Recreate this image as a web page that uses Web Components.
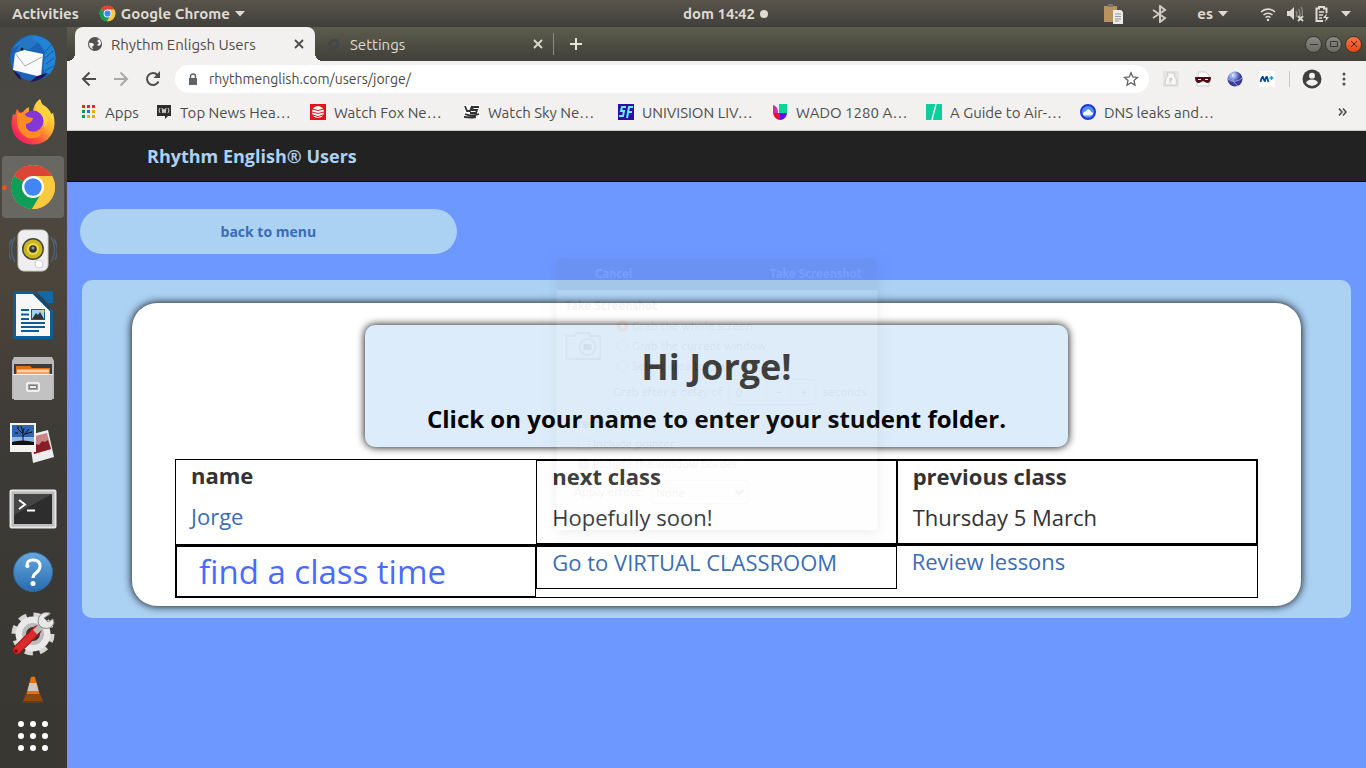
<!DOCTYPE html>
<html lang="en">
<head>
<meta charset="utf-8">
<title>Rhythm English Users</title>
<style>
    body {
        margin: 0;
        min-height: 100vh;
        display: flex;
        flex-direction: column;
        font-family: Ubuntu, 'Noto Sans', sans-serif;
        font-size: 15px;
        background: #3f3e39;
    }
    main {
        flex: 1;
        display: flex;
    }
</style>
</head>
<body>
<desktop-bar></desktop-bar>
<main>
    <app-dock></app-dock>
    <browser-window>
        <browser-tab slot="tabs" active icon="globe">Rhythm Enligsh Users</browser-tab>
        <browser-tab slot="tabs" icon="gear">Settings</browser-tab>
        <browser-toolbar slot="toolbar" url="rhythmenglish.com/users/jorge/"></browser-toolbar>
        <bookmark-link slot="bookmarks" icon="apps" short>Apps</bookmark-link>
        <bookmark-link slot="bookmarks" icon="news">Top News Hea…</bookmark-link>
        <bookmark-link slot="bookmarks" icon="fox">Watch Fox Ne…</bookmark-link>
        <bookmark-link slot="bookmarks" icon="sky">Watch Sky Ne…</bookmark-link>
        <bookmark-link slot="bookmarks" icon="sf">UNIVISION LIV…</bookmark-link>
        <bookmark-link slot="bookmarks" icon="univision">WADO 1280 A…</bookmark-link>
        <bookmark-link slot="bookmarks" icon="guide">A Guide to Air-…</bookmark-link>
        <bookmark-link slot="bookmarks" icon="dns">DNS leaks and…</bookmark-link>
        <users-page></users-page>
        <screenshot-dialog slot="overlay"></screenshot-dialog>
    </browser-window>
</main>
<script>
// name: [width, height, markup]
const icons = {
    // Panel
    chrome: [48, 48, `<circle cx="24" cy="24" r="22" fill="#fbc93d"/><path d="M24 24 4.9 13A22 22 0 0 1 43.1 13Z" fill="#db4437"/><path d="M4.9 13A22 22 0 0 0 23 46L33 29 24 24Z" fill="#0f9d58"/><path d="M24 13H43.1A22 22 0 0 1 23 46L33.5 29Z" fill="#fbc93d"/><circle cx="24" cy="24" r="11" fill="#fff"/><circle cx="24" cy="24" r="8.7" fill="#4285f4"/>`],
    arrow: [10, 6, `<path d="M0 0h10L5 5.5Z" fill="#dfdbd2"/>`],
    clipboard: [20, 20, `<path d="M1 2h13v16H1Z" fill="#b8935d"/><path d="M5 0h5v3H5Z" fill="#777"/><path d="M10 6h8l2 2v12H10Z" fill="#ecebe7"/><path d="M12 10h6M12 12.500h6M12 15h6M12 17h4" stroke="#999"/>`],
    bluetooth: [18, 18, `<path d="m2 5 12 8-5 4V1l5 4-12 8" fill="none" stroke="#cfcbc2" stroke-width="2"/>`],
    wifi: [16, 14, `<path d="M1 5a10 10 0 0 1 14 0M3.500 8a6.500 6.500 0 0 1 9 0" fill="none" stroke="#dfdbd2" stroke-width="1.600"/><path d="M5.500 10.500a4 4 0 0 1 5 0" fill="none" stroke="#dfdbd2" stroke-width="1.500"/><circle cx="8" cy="13" r="1.300" fill="#dfdbd2"/>`],
    volume: [17, 16, `<path d="M0 5h3l4-4v13l-4-4H0Z" fill="#dfdbd2"/><path d="M9 5q2 3 0 6M11.500 3q3 5 0 9M14 1q2 3 1 8" fill="none" stroke="#8a877f" stroke-width="1.400"/><path d="m11 10 5 5m0-5-5 5" stroke="#dfdbd2" stroke-width="1.800"/>`],
    battery: [15, 16, `<path d="M8 15H1.500V2.500H4V1h5v1.500h2.500V7" fill="none" stroke="#dfdbd2" stroke-width="2"/><path d="M4 6h5M4 9h4M4 12h3" stroke="#dfdbd2" stroke-width="1.500"/><path d="m12 7-4 5h3l-1 4 4-5h-3Z" fill="#dfdbd2"/>`],
    // Launcher
    thunderbird: [48, 48, `<circle cx="24" cy="23" r="23" fill="#1b63b8"/><path d="M3 14Q12 3 23 0 43 2 46 18q2 11-5 21l-3-1q-6-2-3-11 2-10-2-15Q27 3 15 7Z" fill="#2183d3"/><path d="M13 5q5-6 12-4-2 5 3 7l-7 6-14 2Z" fill="#2377c4"/><path d="m6 18 9-3 19 4-2 23L4 35Z" fill="#fafafa"/><path d="m6 18 10 13 17-9" fill="none" stroke="#aaa"/><path d="M4 35q3 7 8 10l-1-5ZM28 41l-7 6q14-2 17-9" fill="#22165a"/><path d="M35 18l8-9M36 23l8-7M37 29l8-6M36 36l8-5" stroke="#145aa5"/><circle cx="13" cy="14" r="1.500" fill="#222"/>`],
    firefox: [48, 48, `<defs><linearGradient id="fx" x1="1" x2="0" y2="1"><stop offset=".1" stop-color="#fff14a"/><stop offset=".4" stop-color="#ffad2e"/><stop offset=".65" stop-color="#ff4f3d"/><stop offset="1" stop-color="#e6007a"/></linearGradient></defs><path d="M8 10l3 4 3-1q3-4 6-5v6h4Q24 5 31 0l2 5q8 5 9 10l2-1Q49 31 38 41 24 50 10 41-1 32 4 15l2 1Z" fill="url(#fx)"/><circle cx="24" cy="22" r="10.500" fill="#8338d6"/><path d="M8 14q6-1 10 4l6 1q0 4-7 6-1 6 6 8 8 1 12-6-1 14-16 12Q8 34 8 22Z" fill="#ff8b26"/><path d="M31 1q-8 8 0 13 6 6 4 15 7-8 1-17" fill="#ffd13f"/>`],
    speaker: [48, 48, `<path d="M6 10Q-1 22 6 35M3 12Q-3 22 2 33M42 10q7 12 0 25M45 12q6 10 1 21" fill="none" stroke="#4d617a" stroke-width="1.500"/><rect x="9" y="3" width="30" height="41" rx="6" fill="#eee" stroke="#ccc"/><circle cx="24" cy="22" r="11" fill="#444"/><circle cx="24" cy="22" r="9.500" fill="#c9b51c"/><circle cx="24" cy="22" r="6" fill="#ecd84b"/><circle cx="24" cy="22" r="3.800" fill="#333"/><circle cx="24" cy="21" r="1.500" fill="#999"/><circle cx="30" cy="37" r="4" fill="#fff" stroke="#ccc"/>`],
    writer: [48, 48, `<path d="M6 0h18l20 20v28H4V2Z" fill="#0b5e98"/><path d="M7 3h17l17 17v25H7Z" fill="#f7f7f7"/><path d="M27 0h17v12H39Z" fill="#1168a6"/><path d="M24 3v0l17 17V16L29 3Z" fill="#0a4a79"/><path d="M12 19h8M12 23.500h8M12 28h8M12 32h24M12 36h24M12 40h18" stroke="#0b5e98" stroke-width="2"/><path d="M22 18h14v11H22Z" fill="#0b5e98"/><path d="M23 19h12v9H23Z" fill="#9fd1f4"/><path d="m23 28 4-6 2 2 2-3 4 7Z" fill="#333"/><circle cx="34" cy="20" r="1.500" fill="#f3d94a"/>`],
    files: [48, 48, `<path d="M5 2h38l2 4v38H3V6Z" fill="#b9b9b9"/><path d="M5 9h38v10H5Z" fill="#3c3c3c"/><path d="M7 11h14l2 2h18v6H7Z" fill="#e0711c"/><path d="M8 14h32v5H8Z" fill="#f6a45c"/><path d="M8 16h32" stroke="#fff"/><path d="M4 19h40l-1 26H5Z" fill="#c2c2c2"/><path d="M4 19.500h40" stroke="#eee"/><rect x="18" y="28" width="12" height="8" rx="1" fill="#aaa" stroke="#fff" stroke-width="1.500"/><path d="M20.500 30.500h7v3h-7Z" fill="#eee" stroke="#777"/>`],
    photos: [48, 48, `<path d="m20 16 19-5 6 27-21 6Z" fill="#eee"/><path d="m22 18 16-4 4 16-17 5Z" fill="#c98584"/><path d="m24 28 3-3 3 1 3-4 3 1 3-2 3 9-17 5Z" fill="#8a1c24"/><path d="M1 4h26v29H1Z" fill="#f2f2f0"/><path d="M3 6h22v20H3Z" fill="#2f65b4"/><path d="M3 18h22v5H3Z" fill="#92b6e4"/><path d="M3 23q10-3 22 0v3H3Z" fill="#111"/><path d="M14 24v-9l-6-6m6 8 6-7m-6 4-2-7m2 7 1-5m-6 5H6m10 1 7-2M9 10V7" stroke="#111" fill="none"/>`],
    terminal: [48, 48, `<rect x="1.500" y="7.500" width="45" height="37" rx="1" fill="#bbb" stroke="#e6e6e6" stroke-width="2"/><path d="M5 11h38v30H5Z" fill="#2d2d2d"/><path d="M5 11h38L5 32Z" fill="#454545"/><path d="m10 17 6 4.500-6 4.500M18 27.500h8" fill="none" stroke="#fff" stroke-width="2"/>`],
    help: [48, 48, `<defs><linearGradient id="hp" x2="0" y2="1"><stop stop-color="#68a8dd"/><stop offset="1" stop-color="#276cae"/></linearGradient></defs><circle cx="24" cy="25" r="19.500" fill="url(#hp)" stroke="#2f6aa3"/><path d="M18 20q-1-7 6-7t7 6q0 4-4 7-3 2-3 5" fill="none" stroke="#fff" stroke-width="3"/><circle cx="18.500" cy="19" r="2" fill="#fff"/><circle cx="24" cy="36.500" r="2.500" fill="#fff"/>`],
    settings: [48, 48, `<circle cx="24" cy="23" r="19" fill="none" stroke="#d5d5d5" stroke-width="5" stroke-dasharray="8 6.900"/><circle cx="24" cy="23" r="12.500" fill="none" stroke="#e9e9e9" stroke-width="10"/><circle cx="24" cy="23" r="9" fill="none" stroke="#bbb" stroke-width="4"/><path d="m28 19-20 20" stroke="#9d1414" stroke-width="9" stroke-linecap="round"/><path d="m28 19-20 20" stroke="#da2c2c" stroke-width="7" stroke-linecap="round"/><path d="m26 21 9-8" stroke="#bbb" stroke-width="6"/><path d="M41 2q-8-2-11 4-3 8 4 11 8 2 11-5l-1-4-5 3-4-4 6-4Z" fill="#e8e8e8" stroke="#888"/><circle cx="7" cy="40" r="1.800" fill="#6d0d0d"/>`],
    vlc: [20, 28, `<path d="M8 1q2-1 4 0l6 22H2Z" fill="#e8700e"/><path d="M6.500 7h7l2 8h-11Z" fill="#c9c9c9"/><path d="M3 18h14l3 7H0Z" fill="#8d4a0c"/><path d="M0 25h20v2H0Z" fill="#50402e"/>`],
    grid: [32, 32, `<path d="M4 4h0M16 4h0M28 4h0M4 16h0M16 16h0M28 16h0M4 28h0M16 28h0M28 28h0" stroke="#fff" stroke-width="6" stroke-linecap="round"/>`],
    // Browser chrome
    globe: [16, 16, `<circle cx="8" cy="8" r="7" fill="#505050"/><path d="M2 7q4-1 5 1.500 0 2-2 2l1 3Q2 12 2 7ZM8 2q3 0 4 1.500l-2 1.500 2 2-2 2 2 1 2-2q0-4-2.500-5.500Z" fill="#f2f1f0"/>`],
    gear: [16, 16, `<circle cx="8" cy="8" r="4" fill="none" stroke="#46474a" stroke-width="3"/>`],
    close: [10, 10, `<path d="m1 1 8 8M9 1 1 9" fill="none" stroke="currentColor" stroke-width="1.800"/>`],
    plus: [12, 12, `<path d="M6 0v12M0 6h12" stroke="#e8e5df" stroke-width="2"/>`],
    back: [16, 16, `<path d="M15 8H2m6.500-6.500L2 8l6.500 6.500" fill="none" stroke="#4d4d4d" stroke-width="2"/>`],
    forward: [16, 16, `<path d="M1 8h13M7.500 1.500 14 8l-6.500 6.500" fill="none" stroke="#a8a8a8" stroke-width="2"/>`],
    reload: [16, 16, `<path d="M13.500 10.500A6 6 0 1 1 12.500 4" fill="none" stroke="#4d4d4d" stroke-width="2"/><path d="M15 0v7H8.500Z" fill="#4d4d4d"/>`],
    lock: [10, 13, `<path d="M2.500 6V3.500a2.500 2.500 0 0 1 5 0V6" fill="none" stroke="#5f6368" stroke-width="1.400"/><path d="M1 5h8v7H1Z" fill="#5f6368"/>`],
    star: [16, 16, `<path d="m8 1.800 1.800 4.200 4.700.4-3.500 3.100 1 4.600L8 11.700l-4 2.400 1-4.600L1.500 6.400l4.700-.4Z" fill="none" stroke="#5f6368" stroke-width="1.300"/>`],
    extBag: [16, 16, `<path d="M0 0h16v16H0Z" fill="#e5e4e2"/><path d="M4 2h8l-1 3q3 2 3 9H2q0-7 3-9Z" fill="#f6f6f6" stroke="#ccc"/><path d="M7 12V7.500h2q1 1.500-2 2" fill="none" stroke="#c4c4c4"/>`],
    extMask: [16, 16, `<path d="M3 1h8l3 3v4H3ZM2 11h12v4H2Z" fill="#fff" stroke="#ccc"/><path d="M0 6h16q0 6-4 6l-4-2-4 2Q0 12 0 6Z" fill="#4a0d18"/><path d="M3 8h3v1H3ZM10 8h3v1h-3Z" fill="#fff"/>`],
    extGlobe: [16, 16, `<defs><radialGradient id="eg" cx=".35" cy=".25"><stop stop-color="#e7effb"/><stop offset=".6" stop-color="#6f87d6"/><stop offset="1" stop-color="#3f3b95"/></radialGradient></defs><circle cx="8" cy="8" r="7.500" fill="url(#eg)"/><path d="M1 8q8 5 14-1M4 3q1 8 7 12" fill="none" stroke="#8fa6e4"/>`],
    extM: [16, 16, `<path d="M0 0h16v16H0Z" fill="#fff"/><path d="M1.500 11Q3 5 4 6q1 4 2 4 1-5 2-4l1.500 5" fill="none" stroke="#0a4a8c" stroke-width="1.800"/><path d="M10.500 7h4M12.500 5v4" fill="none" stroke="#0aa0dc" stroke-width="1.500"/>`],
    profile: [20, 20, `<circle cx="10" cy="10" r="9.500" fill="#404040"/><circle cx="10" cy="6.800" r="3" fill="#f2f1f0"/><path d="M4 14q1-3.500 6-3.500t6 3.500q-6 6-12 0Z" fill="#f2f1f0"/>`],
    menu: [4, 16, `<path d="M2 3h0M2 8h0M2 13h0" stroke="#4d4d4d" stroke-width="3" stroke-linecap="round"/>`],
    more: [10, 10, `<path d="m1 1.500 3 3.500-3 3.500M5 1.500 8 5 5 8.500" fill="none" stroke="#4d4d4d" stroke-width="1.600"/>`],
    minimize: [10, 10, `<path d="M1 5.500h8" stroke="#3a3935"/>`],
    maximize: [10, 10, `<path d="M1.500 2.500h7v5h-7Z" fill="none" stroke="#3a3935"/>`],
    shut: [10, 10, `<path d="m2 2 6 6M8 2 2 8" stroke="#4e2013"/>`],
    // Bookmarks
    apps: [16, 16, `<path d="M1 1h3v3H1ZM6 1h3v3H6ZM11 1h3v3h-3Z" fill="#e22b22"/><path d="M1 6h3v3H1ZM1 11h3v3H1Z" fill="#109d3f"/><path d="M6 6h3v3H6Z" fill="#2f6fea"/><path d="M11 6h3v3h-3ZM6 11h3v3H6ZM11 11h3v3h-3Z" fill="#f5a60a"/>`],
    news: [16, 16, `<path d="M1 1h14v11h-3l-3 3v-3H1Z" fill="#2d2d2d"/><path d="M4 4q-2 2 0 5M12 4q2 2 0 5M6 4l1 5 1-4 1 4 1-5" fill="none" stroke="#ddd"/>`],
    fox: [16, 16, `<path d="M0 0h16v16H0Z" fill="#e8101c"/><circle cx="8" cy="8" r="6" fill="#fff"/><path d="M2 5q6 3 12 0M2 8q6 3 12 0M3 11q5 3 10 0" fill="none" stroke="#e8101c"/>`],
    sky: [16, 16, `<path d="M0 1h16v14H0Z" fill="#fff"/><path d="m1 2 2 5h3l2-5M15 3H9L8 6h5l-1 3H6M1 10q6 3 14 0M0 13q6 1 12 0" fill="none" stroke="#333" stroke-width="1.800"/>`],
    sf: [16, 16, `<path d="M0 0h16v16H0Z" fill="#2a10a8"/><path d="M8 3H4L3 7h3l-1 5H1M15 3h-4L9 14m1-6h4" fill="none" stroke="#5ff2f7" stroke-width="2"/>`],
    univision: [16, 16, `<path d="M1 1q5 1 5 8H1Z" fill="#d327b0"/><path d="M1 9h7v7q-6-1-7-7Z" fill="#ee0a3c"/><path d="M7 0h8v9H7Z" fill="#10d398"/><path d="M8 9h7q-1 7-7 7Z" fill="#5a0fe8"/>`],
    guide: [16, 16, `<path d="M0 0h16v16H0Z" fill="#0fce9b"/><path d="M10 0 6 16" stroke="#fff" stroke-width="1.300"/>`],
    dns: [16, 16, `<circle cx="8" cy="8" r="7" fill="#4c93f2" stroke="#2734d5" stroke-width="2"/><path d="M3 10q0-3 3-2.500Q7 4 10 6q1 1 1 2 2 0 2 2-1 1.500-3 1.500H5q-2 0-2-1.500Z" fill="#fff"/>`],
    camera: [36, 28, `<path d="M1 4h8l2-3h12l2 3h10v23H1Z" fill="none" stroke="#777" stroke-width="2"/><circle cx="22" cy="15" r="8" fill="none" stroke="#777" stroke-width="2"/><path d="M18 12h8v6h-8Z" fill="#222"/>`],
};

// Registers a custom element with an open shadow root cloned from a template
const define = (name, html, setup) => {
    const template = document.createElement('template');
    template.innerHTML = html;
    window.customElements.define(name, class extends HTMLElement {
        constructor() {
            super();
            this.root = this.attachShadow({ mode: 'open' });
            this.root.appendChild(template.content.cloneNode(true));
        }
        connectedCallback() {
            setup && setup(this, this.root);
        }
    });
};

define('ui-icon', /*html*/`
    <style>
        :host { display: inline-flex; flex: none; }
        svg { display: block; }
    </style>
    <svg aria-hidden="true"></svg>
`, (el, root) => {
    const [width, height, markup] = icons[el.getAttribute('name')];
    const size = el.getAttribute('size');
    const svg = root.querySelector('svg');
    svg.setAttribute('viewBox', `0 0 ${width} ${height}`);
    svg.setAttribute('width', size || width);
    svg.setAttribute('height', size || height);
    svg.innerHTML = markup;
});

define('desktop-bar', /*html*/`
    <style>
        :host {
            display: grid;
            grid-template-columns: 1fr 1fr;
            height: 27px;
            background: linear-gradient(#59554c, #403f3a);
            color: #dfdbd2;
            font-weight: 700;
        }
        div { display: flex; align-items: center; }
        button {
            display: flex;
            align-items: center;
            gap: 5px;
            height: 27px;
            padding: 0;
            border: 0;
            background: none;
            color: inherit;
            font: inherit;
        }
        .left { padding-left: 12px; gap: 20px; }
        .tray { margin-left: auto; padding-right: 15px; gap: 28px; }
        .status { gap: 11px; margin-left: 4px; }
        .dot { width: 8px; height: 8px; border-radius: 50%; background: #dfdbd2; }
    </style>
    <div class="left">
        <button>Activities</button>
        <button><ui-icon name="chrome" size="17"></ui-icon> Google Chrome <ui-icon name="arrow"></ui-icon></button>
    </div>
    <div>
        <button>dom 14:42 <span class="dot"></span></button>
        <div class="tray">
            <ui-icon name="clipboard"></ui-icon>
            <ui-icon name="bluetooth"></ui-icon>
            <button>es <ui-icon name="arrow"></ui-icon></button>
            <button class="status" aria-label="System">
                <ui-icon name="wifi"></ui-icon><ui-icon name="volume"></ui-icon><ui-icon name="battery"></ui-icon><ui-icon name="arrow"></ui-icon>
            </button>
        </div>
    </div>
`);

define('dock-item', /*html*/`
    <style>
        :host { display: flex; height: 62px; }
        :host([small]) { height: 44px; }
        button {
            flex: 1;
            display: flex;
            align-items: center;
            justify-content: center;
            position: relative;
            padding: 0;
            border: 0;
            border-radius: 4px;
            background: none;
        }
        :host([running]) button { background: #686761; }
        :host([running]) button::before {
            content: '';
            position: absolute;
            left: 0;
            width: 5px;
            height: 5px;
            border-radius: 50%;
            background: #e95420;
        }
    </style>
    <button></button>
`, (el, root) => {
    const name = el.getAttribute('icon');
    const button = root.querySelector('button');
    button.setAttribute('aria-label', name);
    button.innerHTML = `<ui-icon name="${name}"></ui-icon>`;
});

define('app-dock', /*html*/`
    <style>
        :host {
            box-sizing: border-box;
            flex: none;
            display: flex;
            flex-direction: column;
            gap: 2px;
            width: 67px;
            padding: 1px 3px 0 2px;
            background: linear-gradient(#484742, #4a4841 20%, #4d453b 33%, #433f38 46%, #3b3a36 60%, #383732);
        }
    </style>
    <dock-item icon="thunderbird"></dock-item>
    <dock-item icon="firefox"></dock-item>
    <dock-item icon="chrome" running></dock-item>
    <dock-item icon="speaker"></dock-item>
    <dock-item icon="writer"></dock-item>
    <dock-item icon="files"></dock-item>
    <dock-item icon="photos"></dock-item>
    <dock-item icon="terminal"></dock-item>
    <dock-item icon="help"></dock-item>
    <dock-item icon="settings"></dock-item>
    <dock-item icon="vlc" small></dock-item>
    <dock-item icon="grid" small></dock-item>
`);

define('browser-window', /*html*/`
    <style>
        :host {
            flex: 1;
            min-width: 0;
            display: flex;
            flex-direction: column;
            position: relative;
        }
        .strip {
            display: flex;
            align-items: center;
            height: 34px;
            padding: 0 4px 0 8px;
            background: linear-gradient(#5c5d4d, #403f3a);
        }
        button { padding: 0; border: 0; background: none; display: flex; align-items: center; justify-content: center; }
        .new { width: 44px; height: 34px; }
        .controls { display: flex; gap: 3px; margin-left: auto; }
        .controls button {
            box-sizing: border-box;
            width: 17px;
            height: 17px;
            border: 1px solid #35342f;
            border-radius: 50%;
            background: linear-gradient(#8b8a82, #6b6a63);
        }
        .controls .shut { background: linear-gradient(#f7764b, #e8460e); }
        .bookmarks {
            box-sizing: border-box;
            display: flex;
            align-items: center;
            height: 34px;
            padding: 0 18px 3px 14px;
            background: #f2f1f0;
            border-bottom: 1px solid #c9c9c6;
        }
        .more { margin-left: auto; }
    </style>
    <div class="strip">
        <slot name="tabs"></slot>
        <button class="new" aria-label="New tab"><ui-icon name="plus"></ui-icon></button>
        <div class="controls">
            <button aria-label="Minimize"><ui-icon name="minimize"></ui-icon></button>
            <button aria-label="Maximize"><ui-icon name="maximize"></ui-icon></button>
            <button class="shut" aria-label="Close"><ui-icon name="shut"></ui-icon></button>
        </div>
    </div>
    <slot name="toolbar"></slot>
    <nav class="bookmarks">
        <slot name="bookmarks"></slot>
        <button class="more" aria-label="More bookmarks"><ui-icon name="more"></ui-icon></button>
    </nav>
    <slot></slot>
    <slot name="overlay"></slot>
`);

define('browser-tab', /*html*/`
    <style>
        :host {
            box-sizing: border-box;
            display: flex;
            align-items: center;
            gap: 8px;
            width: 239px;
            height: 34px;
            padding: 0 10px 0 11px;
            position: relative;
            color: #dfdbd2;
            border-right: 1px solid #8b8a80;
            border-image: linear-gradient(transparent 20%, #8b8a80 20% 80%, transparent 80%) 1;
        }
        :host([active]) {
            width: 240px;
            padding: 0 11px 0 12px;
            border: 0;
            border-radius: 8px 8px 0 0;
            background: #f2f1f0;
            color: #4d4d4d;
        }
        :host([active])::before, :host([active])::after {
            content: '';
            position: absolute;
            bottom: 0;
            left: -8px;
            width: 8px;
            height: 8px;
            background: radial-gradient(circle at 0 0, transparent 8px, #f2f1f0 8px);
        }
        :host([active])::after {
            left: 100%;
            background: radial-gradient(circle at 100% 0, transparent 8px, #f2f1f0 8px);
        }
        .icon { display: flex; }
        .title { flex: 1; text-align: left; }
        button { padding: 0; border: 0; background: none; color: inherit; font: inherit; display: flex; }
    </style>
    <span class="icon"></span>
    <button class="title"><slot></slot></button>
    <button aria-label="Close tab"><ui-icon name="close"></ui-icon></button>
`, (el, root) => {
    root.querySelector('.icon').innerHTML = `<ui-icon name="${el.getAttribute('icon')}"></ui-icon>`;
});

define('browser-toolbar', /*html*/`
    <style>
        :host {
            box-sizing: border-box;
            display: flex;
            align-items: center;
            height: 36px;
            padding: 0 6px;
            background: #f2f1f0;
        }
        button {
            display: flex;
            align-items: center;
            justify-content: center;
            width: 32px;
            height: 32px;
            padding: 0;
            border: 0;
            background: none;
        }
        label {
            flex: 1;
            display: flex;
            align-items: center;
            gap: 11px;
            height: 28px;
            margin: 0 6px;
            padding: 0 2px 0 13px;
            border-radius: 14px;
            background: #fff;
        }
        input {
            flex: 1;
            min-width: 0;
            padding: 0;
            border: 0;
            outline: 0;
            background: none;
            color: #4a4a4a;
            font-family: inherit;
            font-size: 14px;
        }
        .sep { width: 1px; height: 16px; margin: 0 6px; background: #c9c8c6; }
    </style>
    <button aria-label="Back"><ui-icon name="back"></ui-icon></button>
    <button aria-label="Forward"><ui-icon name="forward"></ui-icon></button>
    <button aria-label="Reload"><ui-icon name="reload"></ui-icon></button>
    <label>
        <ui-icon name="lock"></ui-icon>
        <input type="text" aria-label="Address">
        <button aria-label="Bookmark this page"><ui-icon name="star"></ui-icon></button>
    </label>
    <button aria-label="Bag extension"><ui-icon name="extBag"></ui-icon></button>
    <button aria-label="Mask extension"><ui-icon name="extMask"></ui-icon></button>
    <button aria-label="Globe extension"><ui-icon name="extGlobe"></ui-icon></button>
    <button aria-label="Movistar extension"><ui-icon name="extM"></ui-icon></button>
    <span class="sep"></span>
    <button aria-label="Profile"><ui-icon name="profile"></ui-icon></button>
    <button aria-label="Menu"><ui-icon name="menu"></ui-icon></button>
`, (el, root) => {
    root.querySelector('input').value = el.getAttribute('url');
});

define('bookmark-link', /*html*/`
    <style>
        :host { width: 154px; }
        :host([short]) { width: 75px; }
        a {
            display: flex;
            align-items: center;
            gap: 8px;
            color: #4d4d4d;
            text-decoration: none;
            white-space: nowrap;
        }
        span { display: flex; }
    </style>
    <a href="#"><span></span><slot></slot></a>
`, (el, root) => {
    root.querySelector('span').innerHTML = `<ui-icon name="${el.getAttribute('icon')}"></ui-icon>`;
});

define('users-page', /*html*/`
    <style>
        :host {
            flex: 1;
            display: block;
            background: #6d98ff;
            color: #333;
            font-family: 'Open Sans', sans-serif;
        }
        header {
            display: flex;
            align-items: center;
            height: 50px;
            padding-left: 80px;
            background: #222;
            border-bottom: 1px solid #080808;
        }
        header a { color: #abd1f3; font-size: 18px; font-weight: 700; text-decoration: none; }
        .back {
            display: block;
            width: 29%;
            margin: 27px 0 26px 13px;
            border-radius: 23px;
            background: #abd1f3;
            color: #3a6cb8;
            font-size: 14px;
            font-weight: 700;
            line-height: 45px;
            text-align: center;
            text-decoration: none;
        }
        .panel {
            margin: 0 15px;
            padding: 23px 50px 12px;
            border-radius: 10px;
            background: #abd1f3;
        }
        .card {
            padding: 22px 43px 8px;
            border-radius: 25px;
            background: #fff;
            box-shadow: 0 0 8px #000;
        }
    </style>
    <header><a href="#">Rhythm English® Users</a></header>
    <a class="back" href="#">back to menu</a>
    <section class="panel">
        <div class="card">
            <greeting-box>
                Hi Jorge!
                <span slot="hint">Click on your name to enter your student folder.</span>
            </greeting-box>
            <class-table></class-table>
        </div>
    </section>
`);

define('greeting-box', /*html*/`
    <style>
        :host {
            box-sizing: border-box;
            display: block;
            width: 65%;
            margin: 0 auto 12px;
            padding: 21px 0 10px;
            border-radius: 10px;
            background: #ddecfa;
            box-shadow: 0 0 8px #000;
            text-align: center;
        }
        h1 { margin: 0 0 13px; font-size: 36px; line-height: 42px; }
        h2 { margin: 0; color: #000; font-size: 24px; line-height: 36px; }
    </style>
    <h1><slot></slot></h1>
    <h2><slot name="hint"></slot></h2>
`);

define('class-table', /*html*/`
    <style>
        :host { display: block; font-size: 22px; line-height: 31px; }
        table, tbody { display: block; }
        tr {
            display: grid;
            grid-template-columns: repeat(3, 1fr);
            align-items: start;
            border: 1px solid #000;
        }
        td { display: block; padding: 0 15px; }
        .boxed { border: 1px solid #000; }
        p { margin: 0 0 10px; }
        a { color: #3a6cb8; text-decoration: none; }
        .find { padding: 0 22px; font-size: 33px; line-height: 49px; }
        .find a { color: #4a6bff; }
    </style>
    <table>
        <tbody>
            <tr>
                <td><p><b>name</b></p><p><a href="#">Jorge</a></p></td>
                <td class="boxed"><p><b>next class</b></p><p>Hopefully soon!</p></td>
                <td class="boxed"><p><b>previous class</b></p><p>Thursday 5 March</p></td>
            </tr>
            <tr>
                <td class="boxed find"><a href="#">find a class time</a></td>
                <td class="boxed"><p><a href="#">Go to VIRTUAL CLASSROOM</a></p></td>
                <td><p><a href="#">Review lessons</a></p></td>
            </tr>
        </tbody>
    </table>
`);

// Dialog caught halfway through its fade-out
define('screenshot-dialog', /*html*/`
    <style>
        :host {
            position: absolute;
            top: 231px;
            left: 50%;
            transform: translateX(-50%);
            width: 321px;
            height: 272px;
            border-radius: 6px 6px 0 0;
            background: #f5f4f2;
            box-shadow: 0 3px 12px #000;
            color: #444;
            font-size: 12px;
            line-height: 20px;
            opacity: .06;
            pointer-events: none;
        }
        header {
            display: flex;
            justify-content: space-between;
            height: 32px;
            padding: 0 15px 0 39px;
            border-radius: 6px 6px 0 0;
            background: #3f3e39;
        }
        header button { border: 0; padding: 0; background: none; color: #fff; font: inherit; font-weight: 700; }
        form { display: flex; flex-direction: column; padding: 6px 9px; }
        .area { display: flex; align-items: center; gap: 15px; }
        label { display: flex; align-items: center; gap: 4px; }
        input[type=radio], input[type=checkbox] { appearance: none; box-sizing: border-box; width: 12px; height: 12px; margin: 0; border: 1px solid #aaa; border-radius: 3px; }
        input[type=radio] { border-radius: 50%; }
        input[type=radio]:checked { border: 4px solid #e95420; }
        input[type=checkbox]:checked { background: #999; }
        .delay { display: flex; align-items: center; gap: 6px; padding-left: 48px; margin: 3px 0 9px; }
        .delay div { display: flex; border: 1px solid #aaa; border-radius: 3px; }
        .delay input { width: 36px; height: 24px; padding: 0 6px; border: 0; box-sizing: border-box; background: none; font: inherit; }
        .delay button { width: 25px; padding: 0; border: 0; border-left: 1px solid #ccc; background: none; font: inherit; }
        .check { padding-left: 12px; }
        .effect { margin-top: 6px; padding-left: 9px; gap: 8px; }
        select { width: 97px; height: 24px; border: 1px solid #aaa; border-radius: 3px; background: none; color: inherit; font: inherit; }
    </style>
    <header><button>Cancel</button><button>Take Screenshot</button></header>
    <form>
        <b>Take Screenshot</b>
        <div class="area">
            <ui-icon name="camera"></ui-icon>
            <div>
                <label><input type="radio" name="area" checked>Grab the whole screen</label>
                <label><input type="radio" name="area">Grab the current window</label>
                <label><input type="radio" name="area">Select area to grab</label>
            </div>
        </div>
        <div class="delay">
            <label for="delay">Grab after a delay of</label>
            <div><input id="delay" type="text" value="0"><button type="button">−</button><button type="button">+</button></div>
            seconds
        </div>
        <b>Effects</b>
        <label class="check"><input type="checkbox">Include pointer</label>
        <label class="check"><input type="checkbox" checked>Include the window border</label>
        <label class="effect">Apply effect: <select><option>None</option></select></label>
    </form>
`);
</script>
</body>
</html>
